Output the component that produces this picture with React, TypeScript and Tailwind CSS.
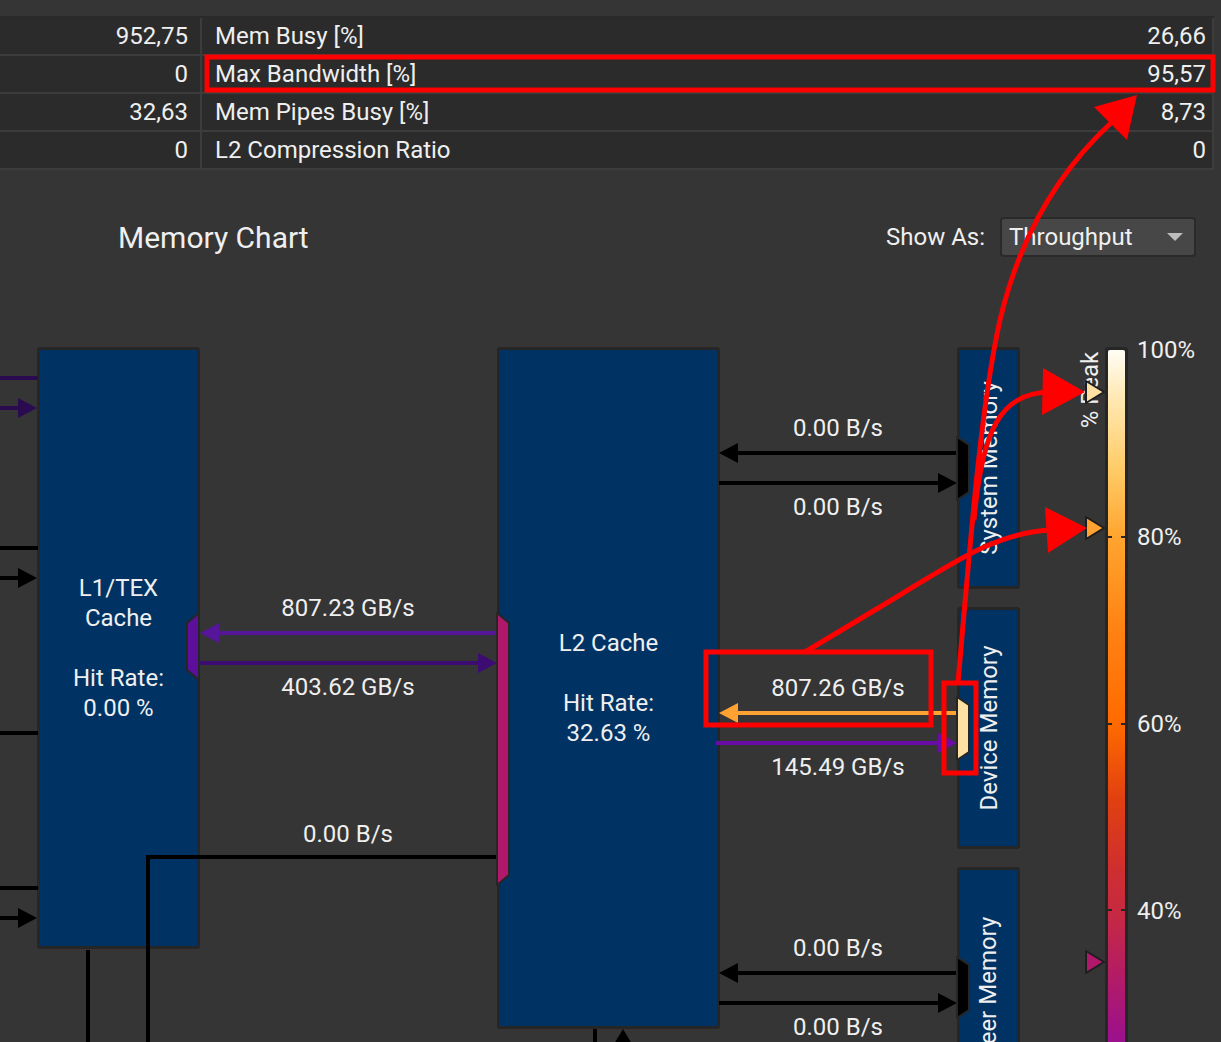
const rows = [
  { left: '952,75', label: 'Mem Busy [%]', value: '26,66' },
  { left: '0', label: 'Max Bandwidth [%]', value: '95,57' },
  { left: '32,63', label: 'Mem Pipes Busy [%]', value: '8,73' },
  { left: '0', label: 'L2 Compression Ratio', value: '0' },
]

const BLACK = '#000000'
const DARK_PURPLE = '#2b0b50'
const PURPLE_A = '#56169a'
const PURPLE_B = '#3c0c72'
const PURPLE_C = '#6a0ca6'
const ORANGE = '#ffa232'
const MAGENTA = '#b0186b'
const PALE = '#ffe0a3'
const EDGE = '#262626'
const RED = '#ff0000'

type Wire = { y: number; from: number; to: number; color: string; head?: boolean }

const wires: Wire[] = [
  // into L1/TEX from the left
  { y: 378, from: 0, to: 38, color: DARK_PURPLE },
  { y: 408, from: 0, to: 37, color: DARK_PURPLE, head: true },
  { y: 548, from: 0, to: 38, color: BLACK },
  { y: 578, from: 0, to: 37, color: BLACK, head: true },
  { y: 733, from: 0, to: 38, color: BLACK },
  { y: 888, from: 0, to: 38, color: BLACK },
  { y: 918, from: 0, to: 37, color: BLACK, head: true },
  // L1 <-> L2
  { y: 633, from: 497, to: 200, color: PURPLE_A, head: true },
  { y: 663, from: 199, to: 497, color: PURPLE_B, head: true },
  // L2 <-> memories
  { y: 453, from: 957, to: 719, color: BLACK, head: true },
  { y: 483, from: 719, to: 957, color: BLACK, head: true },
  { y: 713, from: 957, to: 719, color: ORANGE, head: true },
  { y: 743, from: 716, to: 957, color: PURPLE_C, head: true },
  { y: 973, from: 957, to: 719, color: BLACK, head: true },
  { y: 1003, from: 719, to: 957, color: BLACK, head: true },
]

function Arrow({ y, from, to, color, head }: Wire) {
  const d = to > from ? 1 : -1
  const end = head ? to - d * 17 : to
  return (
    <g>
      <line x1={from} y1={y} x2={end} y2={y} stroke={color} strokeWidth={4} />
      {head && (
        <polygon points={`${to},${y} ${to - d * 19},${y - 10} ${to - d * 19},${y + 10}`} fill={color} />
      )}
    </g>
  )
}

const ports = [
  { points: '199,613 187,623 187,670 199,680', fill: '#5b0f9a' },
  { points: '497,613 509,623 509,875 497,885', fill: MAGENTA },
  { points: '957,437 969,445 969,492 957,500', fill: BLACK },
  { points: '957,697 969,705 969,752 957,760', fill: PALE },
  { points: '957,957 969,965 969,1010 957,1018', fill: BLACK },
]

const markers = [
  { y: 392, fill: PALE },
  { y: 528, fill: ORANGE },
  { y: 962, fill: MAGENTA },
]

const memories = ['System Memory', 'Device Memory', 'Peer Memory']

const box = 'rounded-[3px] border-[3px] border-[#262626] bg-[#003363]'
const label = 'absolute -translate-x-1/2 -translate-y-1/2 whitespace-nowrap leading-[30px]'

export default function App() {
  return (
    <div className="relative h-[1042px] w-[1221px] overflow-hidden bg-[#353535] font-['Roboto','Liberation_Sans',sans-serif] text-[24px] text-[#efefef]">
      {/* metrics table */}
      <div className="h-[16px]" />
      <div className="w-[1214px] border-t-2 border-[#2a2a2a]">
        {rows.map((r) => (
          <div key={r.label} className="flex h-[38px] border-b-2 border-[#3c3c3c] bg-[#2b2b2b] leading-[36px]">
            <div className="w-[202px] border-r-2 border-[#3c3c3c] pr-[12px] text-right">{r.left}</div>
            <div className="flex flex-1 justify-between border-r-2 border-[#3c3c3c] pl-[13px] pr-[6px]">
              <span>{r.label}</span>
              <span>{r.value}</span>
            </div>
          </div>
        ))}
      </div>

      {/* chart header */}
      <div className="mt-[47px] flex h-[40px] items-center justify-between pl-[118px] pr-[25px]">
        <div className="text-[30px]">Memory Chart</div>
        <div className="flex items-center gap-[15px]">
          <span>Show As:</span>
          <div className="relative flex h-[40px] w-[196px] items-center rounded-[4px] border-2 border-[#2a2a2a] bg-[#474747] pl-[7px]">
            Throughput
            <svg className="absolute right-[11px] top-[14px]" width="16" height="8" viewBox="0 0 16 8">
              <polygon points="0,0 16,0 8,8" fill="#bdbdbd" />
            </svg>
          </div>
        </div>
      </div>

      {/* memory chart canvas */}
      <div className="relative mt-[23px] h-[762px]">
        <div className={`${box} absolute left-[37px] top-[67px] flex h-[602px] w-[163px] items-center justify-center text-center leading-[30px]`}>
          <div>
            L1/TEX
            <br />
            Cache
            <br />
            <br />
            Hit Rate:
            <br />
            0.00 %
          </div>
        </div>
        <div className={`${box} absolute left-[497px] top-[67px] flex h-[682px] w-[223px] items-center justify-center text-center leading-[30px]`}>
          <div>
            L2 Cache
            <br />
            <br />
            Hit Rate:
            <br />
            32.63 %
          </div>
        </div>

        {/* memory units */}
        <div className="absolute left-[957px] top-[67px] flex flex-col gap-[18px]">
          {memories.map((m) => (
            <div key={m} className={`${box} flex h-[242px] w-[63px] shrink-0 items-center justify-center`}>
              <span className="-rotate-90 whitespace-nowrap">{m}</span>
            </div>
          ))}
        </div>

        {/* % peak scale */}
        <div className="absolute left-[1105px] top-[55px] flex gap-[9px]">
          <div className="mt-[12px] h-[760px] w-[23px] rounded-[3px] border-[3px] border-[#262626]">
            <div className="h-full w-full rounded-[2px] bg-[linear-gradient(to_bottom,#fffdf5_0px,#ffe8b0_50px,#ffcb66_120px,#ffa52f_187px,#ff8212_280px,#ff6a00_374px,#e04010_450px,#cf2e30_520px,#c72a40_560px,#b01a6a_635px,#9a1090_695px,#900c98_760px)]" />
          </div>
          <div className="flex flex-col gap-[157px] leading-[30px]">
            <span>100%</span>
            <span>80%</span>
            <span>60%</span>
            <span>40%</span>
          </div>
        </div>
        <div className={`${label} left-[1090px] top-[110px] -rotate-90`}>% Peak</div>

        {/* throughput labels */}
        <div className={`${label} left-[348px] top-[328px]`}>807.23 GB/s</div>
        <div className={`${label} left-[348px] top-[407px]`}>403.62 GB/s</div>
        <div className={`${label} left-[348px] top-[554px]`}>0.00 B/s</div>
        <div className={`${label} left-[838px] top-[148px]`}>0.00 B/s</div>
        <div className={`${label} left-[838px] top-[227px]`}>0.00 B/s</div>
        <div className={`${label} left-[838px] top-[408px]`}>807.26 GB/s</div>
        <div className={`${label} left-[838px] top-[487px]`}>145.49 GB/s</div>
        <div className={`${label} left-[838px] top-[668px]`}>0.00 B/s</div>
        <div className={`${label} left-[838px] top-[747px]`}>0.00 B/s</div>

        <svg className="pointer-events-none absolute left-0 top-0" width="1221" height="762" viewBox="0 280 1221 762">
          {wires.map((w, i) => (
            <Arrow key={i} {...w} />
          ))}
          <path d="M148 1044 V857 H497" fill="none" stroke={BLACK} strokeWidth={4} />
          <path d="M88 950 V1044" fill="none" stroke={BLACK} strokeWidth={4} />
          <path d="M595 1029 V1044" fill="none" stroke={BLACK} strokeWidth={4} />
          <polygon points="623,1029 614,1044 632,1044" fill={BLACK} />
          {ports.map((p) => (
            <polygon key={p.points} points={p.points} fill={p.fill} stroke={EDGE} strokeWidth={2} strokeLinejoin="round" />
          ))}
          {[537, 724, 910].map((y) => (
            <line key={y} x1={1108} y1={y} x2={1125} y2={y} stroke={EDGE} strokeWidth={2} strokeDasharray="4 9" />
          ))}
          {markers.map((m) => (
            <polygon
              key={m.y}
              points={`1086,${m.y - 11} 1104,${m.y} 1086,${m.y + 11}`}
              fill={m.fill}
              stroke="#1e1e1e"
              strokeWidth={2}
              strokeLinejoin="round"
            />
          ))}
        </svg>
      </div>

      {/* annotation overlay */}
      <svg className="pointer-events-none absolute left-0 top-0" width="1221" height="1042" viewBox="0 0 1221 1042">
        <g fill="none" stroke={RED} strokeWidth={5}>
          <rect x={207} y={57} width={1006} height={33} />
          <rect x={706} y={652} width={225} height={73} />
          <rect x={944} y={683} width={32} height={90} />
          <path d="M958 683 C972 520 982 400 1000 320 C1020 235 1060 170 1112 122" />
          <path d="M974 520 C982 430 1000 393 1050 392" />
          <path d="M805 652 L900 595 C960 558 1000 532 1052 530" />
        </g>
        <g fill={RED}>
          <polygon points="1094,107 1137,95 1127,140" />
          <polygon points="1043,368 1085,392 1042,415" />
          <polygon points="1045,507 1087,528 1048,553" />
        </g>
      </svg>
    </div>
  )
}
